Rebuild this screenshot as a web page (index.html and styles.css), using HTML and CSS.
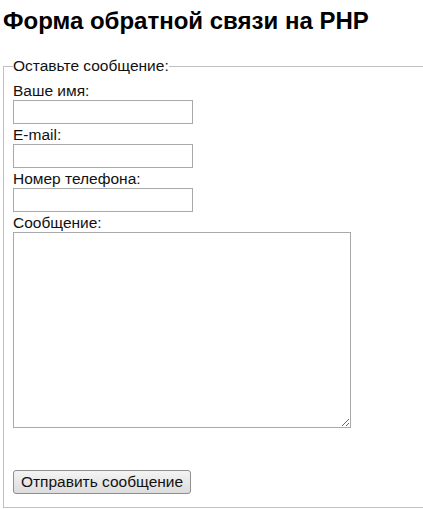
FILE: index.html
```html
<!DOCTYPE html>
<html lang="ru">
<head>
  <meta charset="UTF-8">
  <meta name="viewport" content="width=device-width, initial-scale=1.0">
  <title>Форма обратной связи на PHP</title>
  <link rel="stylesheet" href="styles.css">
</head>
<body>
  <!-- Заголовок -->
  <h1>Форма обратной связи на PHP</h1>

  <!-- Форма -->
  <form class="feedback-form" action="#" method="post">
    <fieldset>
      <legend>Оставьте сообщение:</legend>
      <label for="name">Ваше имя:</label>
      <input type="text" id="name" name="name">
      <label for="email">E-mail:</label>
      <input type="text" id="email" name="email">
      <label for="phone">Номер телефона:</label>
      <input type="text" id="phone" name="phone">
      <label for="message">Сообщение:</label>
      <textarea id="message" name="message"></textarea>
      <button type="submit">Отправить сообщение</button>
    </fieldset>
  </form>
</body>
</html>
```

FILE: styles.css
```css
html {
  overflow: hidden;
}
body {
  font-family: "Liberation Sans", Arial, sans-serif;
  font-size: 15.5px;
  color: #111;
  margin: 0;
  padding: 0 0 0 3px;
  background-color: #fff;
}
h1 {
  font-size: 24px;
  font-weight: bold;
  color: #000;
  margin: 7px 0 22px 0;
}
.feedback-form fieldset {
  box-sizing: border-box;
  width: 421px;
  margin: 0 -1px 0 0;
  padding: 5px 9px 13px 9px;
  border: 1px solid #c0c0c0;
  border-right: none;
}
.feedback-form legend {
  padding: 0;
  line-height: 18px;
}
.feedback-form label {
  display: block;
  line-height: 18px;
  margin-top: 2px;
}
.feedback-form input {
  display: block;
  box-sizing: border-box;
  width: 180px;
  height: 24px;
  margin: 0;
  border: 1px solid #a9a9a9;
  font-family: inherit;
  font-size: 15px;
}
.feedback-form textarea {
  display: block;
  box-sizing: border-box;
  width: 338px;
  height: 196px;
  margin: 0;
  border: 1px solid #a9a9a9;
  font-family: inherit;
}
.feedback-form button {
  display: block;
  box-sizing: border-box;
  width: 178px;
  height: 24px;
  margin-top: 42px;
  padding: 0;
  font-family: inherit;
  font-size: 15.5px;
  color: #111;
  background: linear-gradient(#f4f4f4, #dcdcdc);
  border: 1px solid #8f8f8f;
  border-radius: 3px;
}
```
